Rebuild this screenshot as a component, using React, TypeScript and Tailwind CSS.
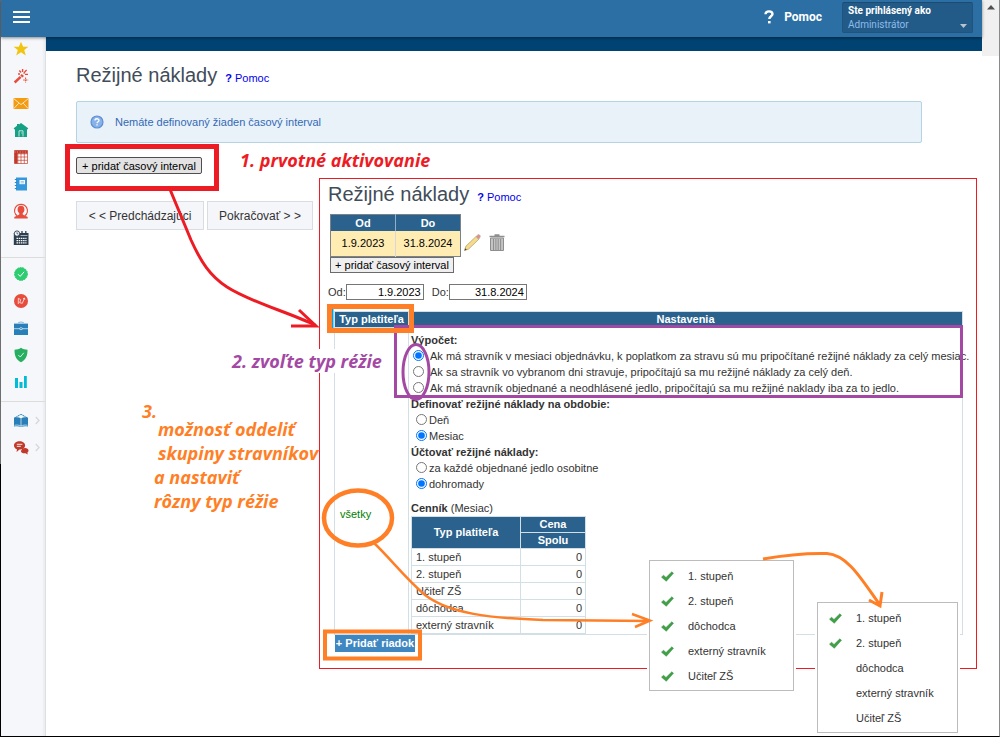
import { useState, type ReactNode } from "react";

/* ── Data ── */

const PAYERS = ["1. stupeň", "2. stupeň", "Učiteľ ZŠ", "dôchodca", "externý stravník"];
const MENU_ITEMS = ["1. stupeň", "2. stupeň", "dôchodca", "externý stravník", "Učiteľ ZŠ"];

const CALC_OPTIONS = [
  "Ak má stravník v mesiaci objednávku, k poplatkom za stravu sú mu pripočítané režijné náklady za celý mesiac.",
  "Ak sa stravník vo vybranom dni stravuje, pripočítajú sa mu režijné náklady za celý deň.",
  "Ak má stravník objednané a neodhlásené jedlo, pripočítajú sa mu režijné naklady iba za to jedlo.",
];

/* ── Sidebar icons, all on a 16 x 16 grid ── */

function Icon({ children }: { children: ReactNode }) {
  return (
    <svg width="16" height="16" viewBox="0 0 16 16" fill="none" aria-hidden="true">
      {children}
    </svg>
  );
}

const starIcon = (
  <Icon>
    <path d="M8 .8l2.1 5h5.3l-4.2 3.3 1.6 5.3L8 11.2l-4.8 3.2 1.6-5.3L.6 5.8h5.3z" fill="#f1c40f" />
  </Icon>
);

const wandIcon = (
  <Icon>
    <path d="M.8 13.6l6-5.6 1.7 1.8-6 5.6z" fill="#e74c3c" />
    <path d="M7.2 7.4l2.2 2.2 1.6-1.5-2.2-2.2z" fill="#e74c3c" />
    <path d="M9.6 1v3M6.3 2.6l1.8 1.8M5 6h2M13.6 2l-2.2 2.4M12 6.4h3M10.6 4.6l1 1" stroke="#e74c3c" strokeWidth="1.4" />
    <path d="M12.6 9.5v5M10.2 12h5" stroke="#e74c3c" strokeWidth="1" strokeDasharray="1.6 .6" />
  </Icon>
);

const mailIcon = (
  <Icon>
    <path d="M.5 3h15v11H.5z" fill="#f39c12" />
    <path d="M.5 3.4L8 9.6l7.5-6.2M.8 13.6l5-5.4M15.2 13.6l-5-5.4" stroke="#fff" strokeOpacity=".8" strokeWidth=".9" />
  </Icon>
);

const homeIcon = (
  <Icon>
    <path d="M8 1l7.2 5.2-.8 1.2-.4-.2V15H2V7.2l-.5.2-.8-1.2L4 3.800V2h2v.5z" fill="#16a085" />
    <path d="M6 14.500V8.800h4v5.700M8.300 11h1" stroke="#e8f6f3" strokeWidth=".8" />
  </Icon>
);

const gridIcon = (
  <Icon>
    <path d="M1.500 1.500h13v13h-13z" fill="#fff" />
    <path d="M1.500 1.500h13v3h-13zM1.500 4.500h3v10h-3z" fill="#c0392b" />
    <path d="M1.500 1.500h13v13h-13zM4.800 1.500v13M8 1.500v13M11.300 1.500v13M1.500 4.800h13M1.500 8h13M1.500 11.300h13" stroke="#c0392b" strokeOpacity=".75" strokeWidth=".9" />
    <path d="M1.500 3h13" stroke="#fff" strokeWidth=".5" strokeDasharray="1 1.600" />
  </Icon>
);

const bookletIcon = (
  <Icon>
    <rect x="3" y="1.500" width="11" height="13" fill="#3498db" />
    <path d="M1.800 3.500h2M1.800 6.500h2M1.800 9.500h2M1.800 12.500h2" stroke="#2e86c1" strokeWidth="1.200" />
    <rect x="6.500" y="4" width="5.500" height="4.200" fill="#fff" />
    <path d="M7.500 5.600h3.500M7.500 6.900h3.500" stroke="#3498db" strokeWidth=".5" />
  </Icon>
);

const personIcon = (
  <Icon>
    <path d="M4.200 12.800C1.500 11 1 7.500 2.300 4.800 4.500.2 11.500.2 13.700 4.800c1.300 2.700.8 6.200-1.900 8" stroke="#e74c3c" strokeWidth="1.200" />
    <path d="M8 2.800c2.300 0 3.400 1.600 3.400 3.700 0 1.700-.7 3-1.700 3.800v1.300l5 2.400v1.500H1.300V14l5-2.400v-1.300c-1-.8-1.700-2.100-1.700-3.800 0-2.100 1.100-3.700 3.400-3.700z" fill="#e74c3c" />
  </Icon>
);

const calendarIcon = (
  <Icon>
    <path d="M.8 3h14.700v12H.8z" fill="#2c3e50" />
    <path d="M9 1v3M12.800 1v3" stroke="#2c3e50" strokeWidth="1.300" />
    <circle cx="4" cy="3.600" r="2.700" fill="#f5f7fa" stroke="#2c3e50" strokeWidth=".9" />
    <path d="M4 2.200v1.600h1.300" stroke="#2c3e50" strokeWidth=".7" />
    <path d="M7.500 5.500h7" stroke="#fff" strokeWidth=".6" />
    <path d="M3.500 8.300h10M3.500 10.600h10M3.500 12.900h10" stroke="#fff" strokeWidth="1.300" strokeDasharray="1.500 .7" />
  </Icon>
);

const checkBadgeIcon = (
  <Icon>
    <circle cx="8" cy="8" r="6.500" fill="#2ecc71" stroke="#2ecc71" strokeDasharray="1.600 1" />
    <path d="M5 8.200l2.200 2.200 3.900-4.600" stroke="#fff" strokeWidth="1" />
  </Icon>
);

const pulseBadgeIcon = (
  <Icon>
    <circle cx="8" cy="8" r="7" fill="#e74c3c" />
    <path d="M5.300 11V5.300l2.400 1.400-1 3 2.600.6L11.500 5M10 5.800l1.500-.8.3 1.700" stroke="#fff" strokeOpacity=".8" strokeWidth=".9" />
  </Icon>
);

const briefcaseIcon = (
  <Icon>
    <path d="M5.300 3.200c.2-1.600 5.200-1.600 5.400 0" stroke="#7fb3d5" strokeWidth="1.200" />
    <rect x="1" y="3" width="14" height="12" fill="#2980b9" />
    <path d="M1 8.700h14M1 3.400h14" stroke="#d4e6f1" strokeWidth=".8" />
    <ellipse cx="8" cy="8.700" rx="1.500" ry="1" fill="#2980b9" stroke="#fff" strokeWidth=".6" />
  </Icon>
);

const shieldIcon = (
  <Icon>
    <path d="M8 .8c2 1.400 4.200 1.900 6.500 1.900 0 6-1.500 10-6.500 12.500C3 12.700 1.500 8.700 1.500 2.700 3.800 2.700 6 2.200 8 .8z" fill="#27ae60" />
    <path d="M5.300 8l2 2 3.500-4.200" stroke="#fff" strokeOpacity=".9" strokeWidth=".9" />
  </Icon>
);

const chartIcon = (
  <Icon>
    <path d="M2 4h3v10H2zM6.500 8h3v6h-3zM11 2h2.800v12H11z" fill="#00bcd4" />
  </Icon>
);

const bookIcon = (
  <Icon>
    <path d="M1.500 5L8 1.300 14.500 5" stroke="#2980b9" strokeWidth="1" strokeDasharray="1.500 .4" />
    <path d="M1 4.800c2.600-.8 5-.6 7 .6 2-1.200 4.400-1.400 7-.6v8.700c-2.600-.6-5-.5-7 .6-2-1.100-4.400-1.200-7-.6z" fill="#2980b9" />
    <path d="M8 5.400v8.200M1.500 12.300c2.500-.5 4.600-.2 6.500.8 1.900-1 4-1.300 6.500-.8" stroke="#d4e6f1" strokeWidth=".8" />
  </Icon>
);

const chatIcon = (
  <Icon>
    <path d="M9.500 8.500c3-1.300 6-.2 6 2 0 .9-.5 1.600-1.200 2.100l.5 1.800-2.300-1.200c-2.500.4-4.500-.7-4.600-2.300z" fill="#c0392b" />
    <path d="M6.500 1.300c3.200 0 5.600 1.800 5.600 4.100S9.700 9.600 6.500 9.600L3.600 12l.3-2.800C2.100 8.500 1 7.100 1 5.400c0-2.300 2.400-4.100 5.500-4.100z" fill="#c0392b" />
    <path d="M3.800 4.300h5.600M3.800 6.300h4" stroke="#fff" strokeWidth=".9" />
  </Icon>
);

type NavItem = { label: string; icon: ReactNode; more?: boolean };
type NavGroup = { className: string; items: NavItem[] };

const NAV_GROUPS: NavGroup[] = [
  {
    className: "pb-1",
    items: [
      { label: "Obľúbené", icon: starIcon },
      { label: "Sprievodca", icon: wandIcon },
      { label: "Správy", icon: mailIcon },
      { label: "Domov", icon: homeIcon },
      { label: "Jedálny lístok", icon: gridIcon },
      { label: "Zošit", icon: bookletIcon },
      { label: "Stravníci", icon: personIcon },
      { label: "Kalendár", icon: calendarIcon },
    ],
  },
  {
    className: "border-t border-[#dcdcdc] py-1",
    items: [
      { label: "Potvrdenie", icon: checkBadgeIcon },
      { label: "Normy", icon: pulseBadgeIcon },
      { label: "Sklad", icon: briefcaseIcon },
      { label: "Zabezpečenie", icon: shieldIcon },
      { label: "Štatistiky", icon: chartIcon },
    ],
  },
  {
    className: "border-t border-[#dcdcdc] py-[7px]",
    items: [
      { label: "Príručka", icon: bookIcon, more: true },
      { label: "Podpora", icon: chatIcon, more: true },
    ],
  },
];

/* ── Page chrome ── */

function Header() {
  return (
    <header className="relative z-10 flex h-[37px] items-center bg-[#2b6fa4] pr-[9px] pl-3 text-white shadow-[0_1px_3px_rgba(0,0,0,0.45)]">
      <button type="button" aria-label="Menu" className="mb-1 flex w-[17px] flex-col gap-[3px]">
        <span className="h-[2px] bg-white" />
        <span className="h-[2px] bg-white" />
        <span className="h-[2px] bg-white" />
      </button>
      <div className="ml-auto flex items-center gap-5 font-[Roboto,sans-serif]">
        <a href="#pomoc" className="mb-1 flex items-center gap-[10px] text-xs font-bold">
          <svg width="10" height="14" viewBox="0 0 10 14" fill="none" aria-hidden="true">
            <path d="M1.500 4.200C1.600 2 3 1.400 5 1.400s3.500.9 3.500 2.700c0 2.200-3.200 2.300-3.200 5" stroke="#fff" strokeWidth="2.400" />
            <path d="M4 11h2.600v2.400H4z" fill="#fff" />
          </svg>
          Pomoc
        </a>
        <button
          type="button"
          className="mb-[2px] flex h-[31px] w-[131px] items-center justify-between rounded-[2px] border border-[#1f5480] border-t-[#1c4a70] bg-[#235b88] px-[5px] text-left"
        >
          <span className="text-[10px] leading-[14px]">
            <span className="block font-bold">Ste prihlásený ako</span>
            <span className="block text-[#8dbcec]">Administrátor</span>
          </span>
          <svg width="7" height="4" viewBox="0 0 7 4" className="mb-1 self-end" aria-hidden="true">
            <path d="M0 0h7L3.500 4z" fill="#b9c4cf" />
          </svg>
        </button>
      </div>
    </header>
  );
}

function Sidebar() {
  return (
    <nav aria-label="Hlavné menu" className="w-[45px] shrink-0 border-r border-[#dcdfe3] bg-[#f5f7fa] shadow-[inset_-2px_0_2px_rgba(0,0,0,0.04)]">
      {NAV_GROUPS.map((group, i) => (
        <ul key={i} className={group.className}>
          {group.items.map((item) => (
            <li key={item.label}>
              <a href="#menu" aria-label={item.label} className="flex h-[27px] items-center pb-1 pl-3">
                {item.icon}
                {item.more && (
                  <svg width="5" height="9" viewBox="0 0 5 9" fill="none" className="ml-[6px]" aria-hidden="true">
                    <path d="M.8 1l3.200 3.500L.8 8" stroke="#d5d8db" strokeWidth="1.300" />
                  </svg>
                )}
              </a>
            </li>
          ))}
        </ul>
      ))}
    </nav>
  );
}

function PageTitle() {
  return (
    <div className="flex items-baseline gap-2">
      <h1 className="text-xl leading-7 text-[#414c59]">Režijné náklady</h1>
      <a href="#pomoc" className="text-[11px] leading-4 text-[#0000ee]">
        <b>?</b> Pomoc
      </a>
    </div>
  );
}

/* ── Pieces of the settings window ── */

function Radio({ name, label, checked, onChange, className }: {
  name: string;
  label: string;
  checked: boolean;
  onChange: () => void;
  className?: string;
}) {
  return (
    <label className={`flex h-4 items-center whitespace-nowrap ${className ?? "gap-[2px] pl-[5px]"}`}>
      <input type="radio" name={name} checked={checked} onChange={onChange} className="size-[11px] accent-[#0075ff]" />
      {label}
    </label>
  );
}

function DateField({ label, value }: { label: string; value: string }) {
  return (
    <label className="flex items-center">
      {label}
      <input defaultValue={value} className="h-4 w-[78px] border border-[#767676] bg-white px-[2px] text-right text-black" />
    </label>
  );
}

function IntervalTable() {
  return (
    <div className="mt-[6px] ml-[2px] flex items-end gap-[3px]">
      <table className="w-[131px] border border-[#7b8288] text-center">
        <thead className="bg-[#2a628d] text-white">
          <tr className="h-4">
            <th className="w-1/2 border-r border-[#8fb0c8]">Od</th>
            <th>Do</th>
          </tr>
        </thead>
        <tbody className="bg-[#ffecb3] text-black">
          <tr className="h-[25px]">
            <td className="border-r border-[#d8d8d8]">1.9.2023</td>
            <td>31.8.2024</td>
          </tr>
        </tbody>
      </table>
      <div className="flex h-7 gap-2">
        <button type="button" aria-label="Upraviť">
          <svg width="17" height="17" viewBox="0 0 17 17" aria-hidden="true">
            <path d="M.5 16.500l1.300-4.200L12 2.500 14.800 5.200 4.700 15z" fill="#f5dc8c" stroke="#b5975a" strokeWidth=".7" />
            <path d="M12 2.500L14 .7c1-.5 2.500.8 2.300 2L14.800 5.200z" fill="#e58d83" stroke="#a8aeb3" strokeWidth=".6" />
            <path d="M.5 16.500l.7-2.300 1.600 1.500z" fill="#444" />
          </svg>
        </button>
        <button type="button" aria-label="Odstrániť">
          <svg width="16" height="17" viewBox="0 0 16 17" fill="none" aria-hidden="true">
            <path d="M1.500 4h13v12.500h-13z" fill="#c4c4c4" stroke="#8e8e8e" />
            <path d="M4.500 5v11M6.900 5v11M9.200 5v11M11.600 5v11" stroke="#8e8e8e" />
            <path d="M.5 2.500h15M5.500 1h5" stroke="#8e8e8e" strokeWidth="1.500" />
          </svg>
        </button>
      </div>
    </div>
  );
}

function PriceTable() {
  return (
    <table className="w-[175px] table-fixed border-collapse">
      <thead className="bg-[#2a628d] text-white">
        <tr className="h-4">
          <th rowSpan={2} className="w-[109px] border border-[#d3dfe7] p-0">Typ platiteľa</th>
          <th className="border border-[#d3dfe7] p-0 leading-[15px]">Cena</th>
        </tr>
        <tr className="h-4">
          <th className="border border-[#d3dfe7] p-0 leading-[15px]">Spolu</th>
        </tr>
      </thead>
      <tbody>
        {PAYERS.map((payer) => (
          <tr key={payer} className="h-[17px]">
            <td className="border border-[#d3dfe7] py-0 pr-0 pl-1">{payer}</td>
            <td className="border border-[#d3dfe7] py-0 pr-[3px] pl-0 text-right">0</td>
          </tr>
        ))}
      </tbody>
    </table>
  );
}

function SettingsWindow() {
  const [calc, setCalc] = useState(0);
  const [period, setPeriod] = useState("Mesiac");
  const [billing, setBilling] = useState("dohromady");

  return (
    <section className="absolute top-[178px] left-[319px] w-[658px] border border-[#ed1c24] bg-white pt-px pb-4 pl-2">
      <PageTitle />
      <IntervalTable />
      <button type="button" className="ml-[2px] block h-4 w-[124px] border border-[#6b6b6b] bg-[#efefef] leading-[14px] whitespace-nowrap text-black">
        + pridať časový interval
      </button>
      <div className="mt-[11px] flex gap-2">
        <DateField label="Od:" value="1.9.2023" />
        <DateField label="Do:" value="31.8.2024" />
      </div>

      <table className="mt-[11px] ml-[6px] w-[629px] table-fixed border-collapse">
        <thead className="bg-[#2a628d] text-white">
          <tr className="h-4">
            <th className="w-[74px] border border-[#d3dfe7] p-0 leading-[15px]">Typ platiteľa</th>
            <th className="border border-[#d3dfe7] p-0 leading-[15px]">Nastavenia</th>
          </tr>
        </thead>
        <tbody>
          <tr className="align-top">
            <td className="border border-[#d3dfe7] p-0 pt-[178px] pl-[5px]">
              <a href="#typ" className="text-[#008000]">všetky</a>
            </td>
            <td className="border border-[#d3dfe7] p-0 pt-1 pl-[2px]">
              <h2 className="font-bold">Výpočet:</h2>
              {CALC_OPTIONS.map((text, i) => (
                <Radio
                  key={text}
                  name="calc"
                  label={text}
                  checked={calc === i}
                  onChange={() => setCalc(i)}
                  className="gap-[6px] pl-[2px]"
                />
              ))}
              <h2 className="font-bold">Definovať režijné náklady na obdobie:</h2>
              {["Deň", "Mesiac"].map((text) => (
                <Radio key={text} name="period" label={text} checked={period === text} onChange={() => setPeriod(text)} />
              ))}
              <h2 className="font-bold">Účtovať režijné náklady:</h2>
              {["za každé objednané jedlo osobitne", "dohromady"].map((text) => (
                <Radio key={text} name="billing" label={text} checked={billing === text} onChange={() => setBilling(text)} />
              ))}
              <p className="mt-2">
                <b>Cenník</b> (Mesiac)
              </p>
              <PriceTable />
            </td>
          </tr>
        </tbody>
      </table>
      <button type="button" className="ml-[7px] block h-[17px] w-20 bg-[#3f87c0] font-bold whitespace-nowrap text-white">
        + Pridať riadok
      </button>
    </section>
  );
}

function TickMenu({ ticked, className }: { ticked: number; className: string }) {
  return (
    <ul className={`absolute border border-[#bcbcbc] bg-white py-[2px] ring-2 ring-white ${className}`}>
      {MENU_ITEMS.map((item, i) => (
        <li key={item} className="flex h-[25px] items-center gap-[14px] pl-[11px]">
          <svg width="13" height="13" viewBox="0 0 13 13" aria-hidden="true">
            {i < ticked && <path d="M.5 8.200l2-2 2.500 2.300L10.800 2.800l1.700 1.400L5.300 12.300z" fill="#3fa142" stroke="#3b8a4e" strokeWidth=".5" />}
          </svg>
          {item}
        </li>
      ))}
    </ul>
  );
}

/* ── Hand-drawn notes over the page ── */

function Note({ className, children }: { className: string; children: ReactNode }) {
  return (
    <p className={`absolute font-['Open_Sans',sans-serif] text-lg leading-6 font-bold whitespace-nowrap italic ${className}`}>
      {children}
    </p>
  );
}

function Drawings() {
  return (
    <svg className="pointer-events-none absolute inset-0 h-full w-full" fill="none" aria-hidden="true">
      <circle cx="405" cy="20" r="1" fill="#111" />
      <g stroke="#ed1c24">
        <rect x="67.500" y="146.500" width="149" height="42" strokeWidth="5" />
        <path d="M169 187L191 240C201 262 210 276 227 287C250 302 288 312 315 325" strokeWidth="3" />
        <path d="M299 310L316 326H291" strokeWidth="3" />
      </g>
      <g stroke="#a349a4" strokeWidth="3">
        <rect x="395.500" y="326.500" width="566" height="70" />
        <ellipse cx="416" cy="372" rx="13" ry="27.500" />
      </g>
      <path d="M332.500 309V328" stroke="#00a2e8" strokeWidth="2" />
      <g stroke="#ff7f27">
        <rect x="329.500" y="306.500" width="82" height="24" strokeWidth="5" />
        <rect x="325" y="631.500" width="95" height="27" strokeWidth="4" />
        <ellipse cx="358" cy="518" rx="34" ry="27.500" strokeWidth="4.500" />
        <path d="M374 543C390 558 405 578 425 595C450 614 490 618 543 620L650 621M632 614L650 620.500L635 627" strokeWidth="2.500" />
        <path d="M763 559C785 555 805 553 827 553.500C848 555 862 580 880 605M869 600L880 606L882 592" strokeWidth="3" />
      </g>
    </svg>
  );
}

export default function App() {
  return (
    <div className="relative flex min-h-screen overflow-hidden bg-white pb-px font-['Liberation_Sans',Arial,sans-serif] text-[11px] leading-4 text-[#333]">
      <div className="w-px bg-linear-to-b from-[#6e6e6e] from-63% to-black to-63%" />
      <div className="flex min-w-0 flex-1 flex-col border-b border-black">
        <Header />
        <div className="flex flex-1">
          <Sidebar />
          <main className="min-w-0 flex-1">
            <div className="h-[14px] bg-[#004373]" />
            <div className="pt-[10px] pr-[60px] pl-[30px]">
              <PageTitle />
              <div className="mt-3 flex h-[42px] items-center gap-[11px] rounded-[2px] border border-[#b4d4e3] bg-[#e9f2f9] pl-[13px] text-[#3369b5]">
                <svg width="14" height="14" viewBox="0 0 14 14" fill="none" aria-hidden="true">
                  <circle cx="7" cy="7" r="6" fill="#86b1ea" stroke="#5f8fd3" strokeWidth="1.200" />
                  <path d="M5 5.500C5 3.200 9 3.200 9 5.400 9 6.700 7 6.700 7 8.300M7 9.300v1.300" stroke="#fff" strokeWidth="1.300" />
                </svg>
                Nemáte definovaný žiaden časový interval
              </div>
              <button type="button" className="mt-[14px] block h-[17px] w-[126px] rounded-[2px] border border-[#4f4f4f] bg-[#e3e3e3] leading-[14px] whitespace-nowrap text-black">
                + pridať časový interval
              </button>
              <div className="mt-[27px] flex gap-[3px] text-xs">
                <button type="button" className="h-[29px] w-32 border border-[#d9dce3] bg-[#f5f6fa] whitespace-nowrap">
                  &lt; &lt; Predchádzajúci
                </button>
                <button type="button" className="h-[29px] w-[106px] border border-[#d9dce3] bg-[#f5f6fa] whitespace-nowrap">
                  Pokračovať &gt; &gt;
                </button>
              </div>
            </div>
          </main>
        </div>
      </div>
      <div className="w-[18px] border-r border-b border-r-[#8a8a8a] border-b-black">
        <div className="flex h-14 justify-center bg-[#f0f0f0] pt-[5px]">
          <svg width="8" height="5" viewBox="0 0 8 5" aria-hidden="true">
            <path d="M4 0l4 4.500H0z" fill="#505050" />
          </svg>
        </div>
      </div>

      <SettingsWindow />
      <TickMenu ticked={5} className="top-[560px] left-[649px] w-[145px]" />
      <TickMenu ticked={2} className="top-[602px] left-[817px] w-[141px]" />

      <Note className="top-[148px] left-[240px] text-[#ed1c24]">1. prvotné aktivovanie</Note>
      <Note className="top-[349px] left-[232px] bg-white text-[#a349a4]">2. zvoľte typ réžie</Note>
      <Note className="top-[399px] left-[142px] text-[#ff7f27]">3.</Note>
      <Note className="top-[417px] left-[158px] text-[#ff7f27]">
        možnosť oddeliť
        <br />
        skupiny stravníkov
      </Note>
      <Note className="top-[465px] left-[154px] text-[#ff7f27]">
        a nastaviť
        <br />
        rôzny typ réžie
      </Note>
      <Drawings />
    </div>
  );
}
